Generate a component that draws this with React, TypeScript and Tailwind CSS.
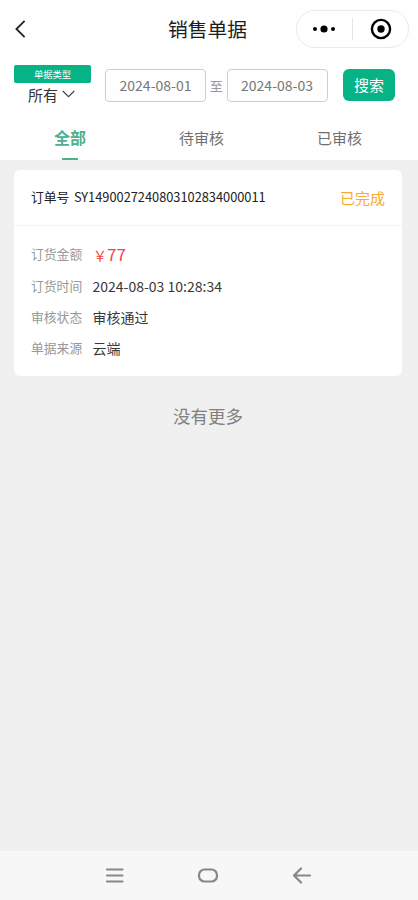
import React, { useState } from "react";

const tabs = [
  { label: "全部", className: "w-[140px]" },
  { label: "待审核", className: "w-[123px]" },
  { label: "已审核", className: "w-[153px]" },
];

const details = [
  { label: "订货时间", value: "2024-08-03 10:28:34" },
  { label: "审核状态", value: "审核通过" },
  { label: "单据来源", value: "云端" },
];

const Header: React.FC = () => (
  <header className="flex h-[60px] items-center pb-[2px] pl-[14px] pr-[9px]">
    <button type="button" aria-label="返回" className="w-[154px]">
      <svg width="13" height="18" viewBox="0 0 13 18" fill="none" stroke="#222" strokeWidth="1.8">
        <path d="M10.6 0.8 2.4 9l8.2 8.2" />
      </svg>
    </button>
    <h1 className="text-[19.8px] leading-none text-[#1c1c1c]">销售单据</h1>
    <div className="ml-auto flex h-[38px] w-[113px] items-center rounded-full border border-[#ebebeb] bg-white">
      <button type="button" aria-label="更多" className="flex w-[55px] justify-center pr-[2px]">
        <svg width="24" height="8" viewBox="0 0 24 8" fill="#000">
          <circle cx="3" cy="4" r="2" />
          <circle cx="12" cy="4" r="3.6" />
          <circle cx="21" cy="4" r="2" />
        </svg>
      </button>
      <span className="h-[22px] w-px bg-[#e5e5e5]" />
      <button type="button" aria-label="关闭" className="flex flex-1 justify-center">
        <svg width="22" height="22" viewBox="0 0 22 22" fill="none">
          <circle cx="11" cy="11" r="9.1" stroke="#000" strokeWidth="2.4" />
          <circle cx="11" cy="11" r="3.7" fill="#000" />
        </svg>
      </button>
    </div>
  </header>
);

const DateBox: React.FC<{ value: string }> = ({ value }) => (
  <div className="flex h-[33px] w-[101px] items-center justify-center rounded-[4px] border border-[#cfcfcf] text-[14px] leading-none text-[#777]">
    {value}
  </div>
);

const Filters: React.FC = () => (
  <div className="flex h-[58px] pl-[14px]">
    <div className="w-[77px] pt-[5px]">
      <div className="flex h-[18px] items-center justify-center rounded-[2px] bg-[#05b384] pt-px text-[9.3px] leading-none text-white">
        单据类型
      </div>
      <button type="button" className="flex h-[22px] items-center gap-[4px] pl-[14px] text-[15px] leading-none text-[#333]">
        所有
        <svg width="13" height="8" viewBox="0 0 13 8" fill="none" stroke="#444" strokeWidth="1.2">
          <path d="m0.8 1 5.7 5.6L12.2 1" />
        </svg>
      </button>
    </div>
    <div className="mt-[8.5px] ml-[14px] flex h-[33px] items-center self-start">
      <DateBox value="2024-08-01" />
      <span className="w-[20.5px] text-center text-[13px] leading-none text-[#999]">至</span>
      <DateBox value="2024-08-03" />
      <button type="button" className="ml-[15.5px] h-[32px] w-[52px] rounded-[6px] bg-[#05b384] pb-[2px] text-[15px] leading-none text-white">
        搜索
      </button>
    </div>
  </div>
);

const Tabs: React.FC = () => {
  const [active, setActive] = useState(0);

  return (
    <nav className="flex h-[42px]">
      {
        tabs.map((tab, index) => (
          <button
            type="button"
            key={tab.label}
            onClick={() => setActive(index)}
            className={`${tab.className} flex flex-col items-center justify-between leading-none ${active === index ? "pt-[11px] text-[16px] font-bold text-[#4fb08c]" : "pt-[12px] text-[15px] text-[#707070]"}`}
          >
            {tab.label}
            {active === index && <span className="h-[2.5px] w-[16px] bg-[#4fb08c]" />}
          </button>
        ))
      }
    </nav>
  );
};

const OrderCard: React.FC = () => (
  <article className="mx-[14px] mt-[10px] h-[205.5px] w-[388px] rounded-[6px] bg-white">
    <div className="flex h-[56px] items-center justify-between border-b border-[#f4f4f4] px-[17px] leading-none">
      <div className="flex gap-[4.5px] text-[12.8px] text-[#222]">
        <span>订单号</span>
        <span>SY1490027240803102834000011</span>
      </div>
      <span className="text-[15px] text-[#f8ab30]">已完成</span>
    </div>
    <div className="px-[17px] pt-[12px] leading-none">
      <div className="flex h-[33px] items-center">
        <span className="w-[62px] text-[12.8px] text-[#999]">订货金额</span>
        <span className="flex items-baseline pb-[3px] text-[17px] text-[#f2474a]">
          <span className="text-[14px]">￥</span>
          77
        </span>
      </div>
      {
        details.map(item => (
          <div key={item.label} className="flex h-[31px] items-center">
            <span className="w-[61.5px] text-[12.8px] text-[#999]">{item.label}</span>
            <span className="pb-px text-[14px] text-[#383838]">{item.value}</span>
          </div>
        ))
      }
    </div>
  </article>
);

const SystemBar: React.FC = () => (
  <footer className="flex h-[49px] items-center justify-between bg-[#f7f7f7] pl-[105px] pr-[106px]">
    <svg width="19" height="16" viewBox="0 0 19 16" fill="none" stroke="#888" strokeWidth="2.1" strokeLinecap="round">
      <path d="M2 1.5h15.5M2 7.5h15.5M2 13.5h15.5" />
    </svg>
    <svg width="22" height="16" viewBox="0 0 22 16" fill="none" stroke="#888" strokeWidth="2.2">
      <rect x="2" y="1.5" width="18" height="12" rx="5.5" />
    </svg>
    <svg width="20" height="18" viewBox="0 0 20 18" fill="none" stroke="#888" strokeWidth="2.2" strokeLinecap="round" strokeLinejoin="round">
      <path d="M9 1.5 2 8.5l7 7M2.5 8.5H18" />
    </svg>
  </footer>
);

const App: React.FC = () => (
  <div className="flex h-[900px] w-[418px] flex-col bg-[#f0f0f0] font-['Noto_Sans_CJK_SC',sans-serif]">
    <div className="bg-[#fefefe]">
      <Header />
      <Filters />
      <Tabs />
    </div>
    <main className="flex-1">
      <OrderCard />
      <p className="mt-[31.5px] pr-[2px] text-center text-[17.5px] leading-none text-[#808080]">没有更多</p>
    </main>
    <SystemBar />
  </div>
);

export default App;
